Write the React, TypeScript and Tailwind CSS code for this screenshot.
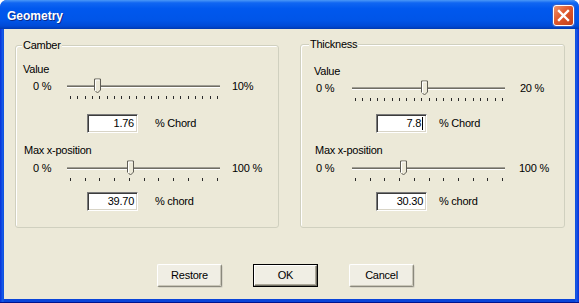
import React from 'react';

interface SliderProps {
  ticks: number;
  thumb: number;
}

// trackbar drawn as one svg: channel, tick marks, thumb
const Slider = ({ ticks, thumb }: SliderProps) => {
  const tickXs = Array.from(
    { length: ticks },
    (_, i) => 3 + Math.round((i * 147) / (ticks - 1)),
  );
  const c = thumb + 0.5;
  return (
    <svg width="153" height="24" viewBox="0 0 153 24" className="block shrink-0">
      <rect x="0" y="7" width="153" height="1" fill="#a09e94" />
      <rect x="0" y="8" width="153" height="1" fill="#6f6d63" />
      <rect x="0" y="9" width="153" height="1" fill="#ffffff" />
      {tickXs.map((x) => (
        <rect key={x} x={x} y="18" width="1" height="3" fill="#2a2a2a" />
      ))}
      <polygon
        points={`${c - 3},1 ${c + 3},1 ${c + 3},12 ${c},15 ${c - 3},12`}
        fill="#ece9d8"
        stroke="#5f5d55"
        strokeWidth="1"
      />
      <polyline
        points={`${c - 2},13 ${c - 2},2 ${c + 2},2`}
        fill="none"
        stroke="#ffffff"
        strokeWidth="1"
      />
    </svg>
  );
};

interface RowProps {
  label: string;
  labelClass: string;
  zero: string;
  zeroClass: string;
  max: string;
  maxClass: string;
  ticks: number;
  thumb: number;
  value: string;
  inputClass: string;
  inputRowClass: string;
  unit: string;
  unitClass: string;
  caret?: boolean;
  first?: boolean;
}

const SliderBlock = (props: RowProps) => {
  return (
    <div className="flex flex-col">
      <div
        className={`h-[13px] leading-[13px] ${props.first ? 'mt-0' : 'mt-[11px]'} ${props.labelClass}`}
      >
        {props.label}
      </div>
      <div
        className={`flex h-[24px] ${props.first ? 'mt-[2px]' : 'mt-[3px]'}`}
      >
        <div className={`pt-[2px] leading-[13px] shrink-0 ${props.zeroClass}`}>
          {props.zero}
        </div>
        <Slider ticks={props.ticks} thumb={props.thumb} />
        <div className={`pt-[2px] leading-[13px] ${props.maxClass}`}>
          {props.max}
        </div>
      </div>
      <div className={`flex items-center h-[19px] ${props.inputRowClass}`}>
        <div
          className={`flex items-center justify-end h-[19px] w-[51px] pr-[3px] bg-white border border-t-[#7a7a7a] border-l-[#7a7a7a] border-r-white border-b-white shadow-[inset_1px_1px_0_#3c3c3c,inset_-1px_-1px_0_#d8d4c6] ${props.inputClass}`}
        >
          <span className="leading-[13px]">{props.value}</span>
          {props.caret && (
            <span className="w-[1px] h-[13px] bg-black ml-[1px]" />
          )}
        </div>
        <div className={`leading-[13px] ${props.unitClass}`}>{props.unit}</div>
      </div>
    </div>
  );
};

const Camber = () => {
  return (
    <div className="relative w-[264px] h-[183px] shrink-0 border border-[#d0d0bf] rounded-[3px] shadow-[inset_1px_1px_0_#ffffff]">
      <span className="absolute -top-[7px] left-[6px] px-[1px] leading-[13px] bg-[#ece9d8]">
        Camber
      </span>
      <div className="flex flex-col pt-[17px]">
        <SliderBlock
          first
          label="Value"
          labelClass="ml-[7px]"
          zero="0 %"
          zeroClass="ml-[17px] w-[34px]"
          max="10%"
          maxClass="ml-[12px]"
          ticks={21}
          thumb={30}
          value="1.76"
          inputClass="ml-[71px]"
          inputRowClass="mt-[12px]"
          unit="% Chord"
          unitClass="ml-[17px]"
        />
        <SliderBlock
          label="Max x-position"
          labelClass="ml-[8px]"
          zero="0 %"
          zeroClass="ml-[17px] w-[34px]"
          max="100 %"
          maxClass="ml-[12px]"
          ticks={11}
          thumb={63}
          value="39.70"
          inputClass="ml-[71px]"
          inputRowClass="mt-[8px]"
          unit="% chord"
          unitClass="ml-[17px]"
        />
      </div>
    </div>
  );
};

const Thickness = () => {
  return (
    <div className="relative w-[265px] h-[184px] -mt-[1px] shrink-0 border border-[#d0d0bf] rounded-[3px] shadow-[inset_1px_1px_0_#ffffff]">
      <span className="absolute -top-[7px] left-[8px] px-[1px] leading-[13px] bg-[#ece9d8]">
        Thickness
      </span>
      <div className="flex flex-col pt-[20px]">
        <SliderBlock
          first
          label="Value"
          labelClass="ml-[13px]"
          zero="0 %"
          zeroClass="ml-[15px] w-[36px]"
          max="20 %"
          maxClass="ml-[15px]"
          ticks={21}
          thumb={72}
          value="7.8"
          caret
          inputClass="ml-[75px]"
          inputRowClass="mt-[10px]"
          unit="% Chord"
          unitClass="ml-[12px]"
        />
        <SliderBlock
          label="Max x-position"
          labelClass="ml-[14px]"
          zero="0 %"
          zeroClass="ml-[15px] w-[36px]"
          max="100 %"
          maxClass="ml-[14px]"
          ticks={11}
          thumb={51}
          value="30.30"
          inputClass="ml-[75px]"
          inputRowClass="mt-[8px]"
          unit="% chord"
          unitClass="ml-[12px]"
        />
      </div>
    </div>
  );
};

const Button = ({ label, isDefault }: { label: string; isDefault?: boolean }) => {
  if (isDefault) {
    return (
      <div className="w-[65px] h-[23px] border border-black bg-[#f0eee4]">
        <div className="flex items-center justify-center h-full border border-t-white border-l-white border-r-[#716f64] border-b-[#716f64] shadow-[inset_-1px_-1px_0_#aca899]">
          {label}
        </div>
      </div>
    );
  }
  return (
    <div className="flex items-center justify-center w-[65px] h-[23px] rounded-[2px] bg-[#f0eee4] border border-t-white border-l-white border-r-[#8a887c] border-b-[#8a887c] shadow-[inset_-1px_-1px_0_#c9c6b8,1px_1px_0_#d8d5c8]">
      {label}
    </div>
  );
};

const CloseButton = () => {
  return (
    <div className="w-[21px] h-[21px] rounded-[3px] border border-white bg-[linear-gradient(135deg,#f0946c_0%,#e0582c_45%,#c4401a_100%)] shadow-[0_0_0_1px_#3a62c8]">
      <svg width="19" height="19" viewBox="0 0 19 19" className="block">
        <path
          d="M5 5 L14 14 M14 5 L5 14"
          stroke="#ffffff"
          strokeWidth="2.4"
          strokeLinecap="square"
        />
      </svg>
    </div>
  );
};

export default function App() {
  return (
    <div className="w-[579px] h-[303px] flex flex-col bg-white font-['Liberation_Sans',Arial,sans-serif] text-[11px] tracking-[-0.25px] text-black">
      <div className="flex flex-col flex-1 rounded-t-[7px] overflow-hidden bg-[#0a45d9]">
        <div className="h-[29px] shrink-0 flex items-center pt-[2px] pl-[7px] pr-[5px] bg-[linear-gradient(to_bottom,#4a98f7_0%,#1066f2_10%,#0058ee_30%,#0055e8_70%,#004ad6_90%,#0039b0_100%)]">
          <span className="flex-1 text-white font-bold text-[12px] leading-[14px] tracking-normal [text-shadow:1px_1px_0_#0a2a8a]">
            Geometry
          </span>
          <CloseButton />
        </div>
        <div className="flex flex-1 pl-[4px] pr-[4px] pb-[3px] bg-[linear-gradient(to_right,#0831d9_0px,#1660ea_3px,#0a45d9_4px,#0a45d9_575px,#1a5ee6_576px,#0831d9_579px)] border-b border-[#00138c]">
          <div className="flex flex-col flex-1 bg-[#ece9d8]">
            <div className="flex items-start gap-[21px] pl-[11px] pt-[16px]">
              <Camber />
              <Thickness />
            </div>
            <div className="flex gap-[31px] pl-[153px] mt-[36px]">
              <Button label="Restore" />
              <Button label="OK" isDefault />
              <Button label="Cancel" />
            </div>
          </div>
        </div>
      </div>
    </div>
  );
}
